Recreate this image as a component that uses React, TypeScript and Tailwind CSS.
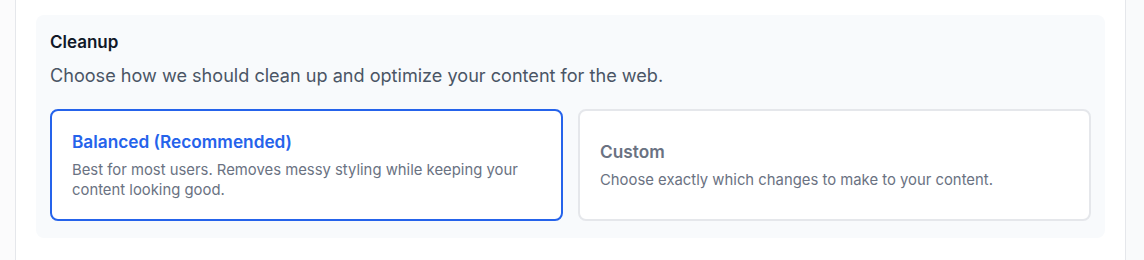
import React from "react";

export default function App() {
  return (
    <div className="flex h-[260px] w-[1144px] bg-white" style={{ fontFamily: "Inter, 'Noto Sans', sans-serif" }}>
      <div className="w-[16px] shrink-0 border-r border-gray-200 bg-[#fbfbfc]" />
      <div className="flex-1 px-5 pt-[15px]">
        <div className="rounded-lg bg-[#f8fafc] px-[14px] pt-[16px] pb-[17px]">
          <h3 className="text-[17px] font-semibold leading-[22px] text-gray-900">Cleanup</h3>
          <p className="mt-[9px] text-[18.1px] leading-[26px] text-gray-600">
            Choose how we should clean up and optimize your content for the web.
          </p>
          <div className="mt-[21px] grid grid-cols-2 gap-[15px]">
            <button className="flex h-[112px] flex-col justify-center rounded-lg border-2 border-[#2563eb] bg-white px-5 text-left">
              <span className="text-[17.25px] font-semibold leading-[24px] text-[#2563eb]">Balanced (Recommended)</span>
              <span className="mt-[6px] text-[14.85px] leading-[20px] text-gray-500">
                Best for most users. Removes messy styling while keeping your content looking good.
              </span>
            </button>
            <button className="flex h-[112px] flex-col justify-center rounded-lg border-2 border-gray-200 bg-white px-5 text-left">
              <span className="text-[17.25px] font-semibold leading-[24px] text-gray-500">Custom</span>
              <span className="mt-[6px] text-[14.85px] leading-[20px] text-gray-500">
                Choose exactly which changes to make to your content.
              </span>
            </button>
          </div>
        </div>
      </div>
      <div className="w-[19px] shrink-0 border-l border-gray-200 bg-[#f9fafb]" />
    </div>
  );
}
